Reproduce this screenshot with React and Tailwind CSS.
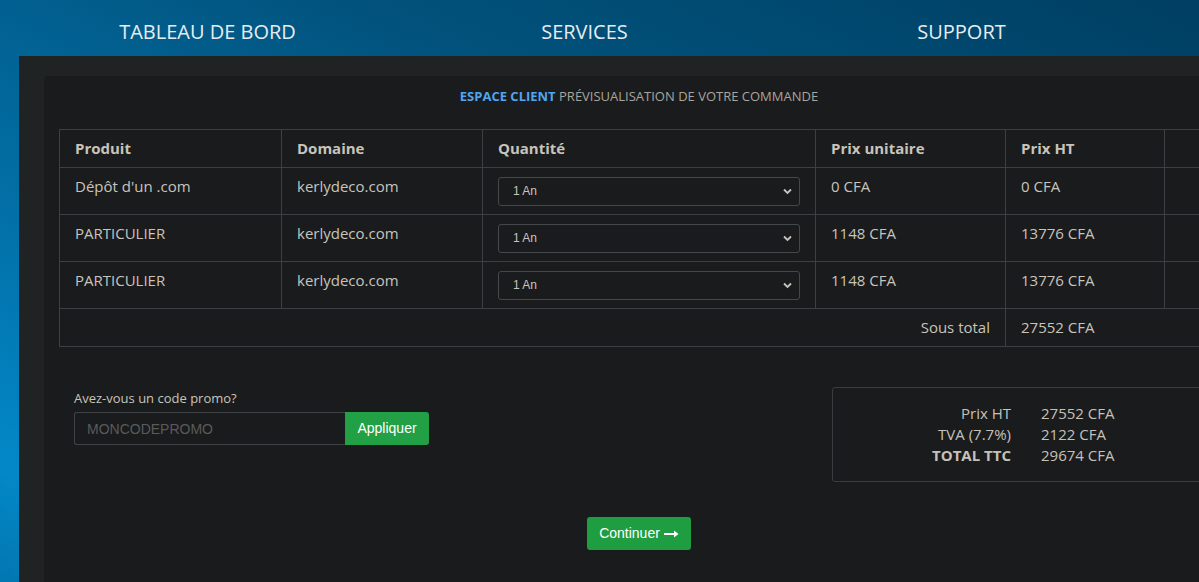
import React from 'react';

const rows = [
    { produit: "Dépôt d'un .com", domaine: 'kerlydeco.com', unit: '0 CFA', ht: '0 CFA' },
    { produit: 'PARTICULIER', domaine: 'kerlydeco.com', unit: '1148 CFA', ht: '13776 CFA' },
    { produit: 'PARTICULIER', domaine: 'kerlydeco.com', unit: '1148 CFA', ht: '13776 CFA' },
];

const QtySelect = () => (
    <div className="relative">
        <select className="appearance-none w-full h-[29px] bg-[#1a1b1d] border border-[#45484b] rounded-[3px] pl-[14px] text-[12px] text-[#c8c4bc] font-['Liberation_Sans',Arial,sans-serif] outline-none">
            <option>1 An</option>
            <option>2 Ans</option>
        </select>
        {/* chevron over the select */}
        <svg className="absolute right-[8px] top-[11px] pointer-events-none" width="9" height="7" viewBox="0 0 9 7">
            <path d="M1 1.5 L4.5 5 L8 1.5" fill="none" stroke="#c8c4bc" strokeWidth="1.8" />
        </svg>
    </div>
);

export default function App() {
    return (
        <div className="min-h-[582px] w-full overflow-hidden bg-[linear-gradient(to_bottom_left,#003f63_0%,#01527c_35%,#0272aa_70%,#0388c8_90%,#0277b0_100%)] font-['Open_Sans',sans-serif]">
            {/* top navigation */}
            <nav className="grid grid-cols-[377px_377px_377px] pl-[19px] h-[56px] items-center">
                <a className="text-center text-[20px] text-[#e6edf1] pt-[8px]">TABLEAU DE BORD</a>
                <a className="text-center text-[20px] text-[#e6edf1] pt-[8px]">SERVICES</a>
                <a className="text-center text-[20px] text-[#e6edf1] pt-[8px]">SUPPORT</a>
            </nav>

            <div className="ml-[19px] w-[1240px] min-h-[526px] bg-[#202324] pt-[20px] pl-[25px]">
                <div className="w-[1190px] min-h-[506px] bg-[#1a1b1d] rounded-tl-[4px] px-[15px] pt-[11px]">
                    {/* title */}
                    <div className="text-center text-[13px] leading-[18px]">
                        <span className="font-bold text-[#4fa6ee]">ESPACE CLIENT</span>
                        <span className="text-[#a9a59e]"> PRÉVISUALISATION DE VOTRE COMMANDE</span>
                    </div>

                    {/* order table */}
                    <table className="mt-[24px] w-[1160px] border-collapse table-fixed text-[15px] text-[#c8c4bc]">
                        <colgroup>
                            <col className="w-[222px]" />
                            <col className="w-[201px]" />
                            <col className="w-[333px]" />
                            <col className="w-[190px]" />
                            <col className="w-[159px]" />
                            <col />
                        </colgroup>
                        <thead>
                            <tr className="h-[38px]">
                                <th className="border border-[#3d4043] px-[15px] text-left font-bold">Produit</th>
                                <th className="border border-[#3d4043] px-[15px] text-left font-bold">Domaine</th>
                                <th className="border border-[#3d4043] px-[15px] text-left font-bold">Quantité</th>
                                <th className="border border-[#3d4043] px-[15px] text-left font-bold">Prix unitaire</th>
                                <th className="border border-[#3d4043] px-[15px] text-left font-bold">Prix HT</th>
                                <th className="border border-[#3d4043]"></th>
                            </tr>
                        </thead>
                        <tbody>
                            {rows.map((r, i) => (
                                <tr key={i} className="h-[47px]">
                                    <td className="border border-[#3d4043] px-[15px] pt-[7px] align-top leading-[22px]">{r.produit}</td>
                                    <td className="border border-[#3d4043] px-[15px] pt-[7px] align-top leading-[22px]">{r.domaine}</td>
                                    <td className="border border-[#3d4043] px-[15px] align-middle">
                                        <QtySelect />
                                    </td>
                                    <td className="border border-[#3d4043] px-[15px] pt-[7px] align-top leading-[22px]">{r.unit}</td>
                                    <td className="border border-[#3d4043] px-[15px] pt-[7px] align-top leading-[22px]">{r.ht}</td>
                                    <td className="border border-[#3d4043]"></td>
                                </tr>
                            ))}
                            <tr className="h-[38px]">
                                <td colSpan={4} className="border border-[#3d4043] px-[15px] text-right">Sous total</td>
                                <td colSpan={2} className="border border-[#3d4043] px-[15px]">27552 CFA</td>
                            </tr>
                        </tbody>
                    </table>

                    {/* promo code + totals */}
                    <div className="flex items-start mt-[41px]">
                        <div className="w-[773px] pl-[15px]">
                            <div className="text-[13px] leading-[20px] text-[#c8c4bc]">Avez-vous un code promo?</div>
                            <div className="flex mt-[4px]">
                                <input
                                    placeholder="MONCODEPROMO"
                                    className="w-[271px] h-[33px] bg-[#1a1b1d] border border-[#3f4245] border-r-0 rounded-l-[3px] px-[12px] text-[14px] font-['Liberation_Sans',Arial,sans-serif] text-[#c8c4bc] placeholder:text-[#5a5a5a] outline-none"
                                />
                                <button className="w-[84px] h-[33px] bg-[#22a045] rounded-r-[3px] text-[14px] text-white font-['Liberation_Sans',Arial,sans-serif]">
                                    Appliquer
                                </button>
                            </div>
                        </div>
                        <div className="w-[372px] -mt-[1px] border border-[#3a3d40] rounded-[3px] py-[15px]">
                            <div className="grid grid-cols-[178px_auto] gap-x-[30px] text-[15px] leading-[21px] text-[#c5c1b9]">
                                <span className="text-right">Prix HT</span>
                                <span>27552 CFA</span>
                                <span className="text-right">TVA (7.7%)</span>
                                <span>2122 CFA</span>
                                <span className="text-right font-bold">TOTAL TTC</span>
                                <span>29674 CFA</span>
                            </div>
                        </div>
                    </div>

                    {/* continue */}
                    <div className="flex justify-center mt-[35px] pb-[30px]">
                        <button className="flex items-center gap-[4px] h-[33px] px-[12px] bg-[#1f9d41] rounded-[3px] text-[14px] text-white font-['Liberation_Sans',Arial,sans-serif]">
                            Continuer
                            <svg width="15" height="8" viewBox="0 0 15 8">
                                <path d="M0 4 H11" stroke="white" strokeWidth="2" />
                                <path d="M10 0.5 L14.5 4 L10 7.5 Z" fill="white" />
                            </svg>
                        </button>
                    </div>
                </div>
            </div>
        </div>
    );
}
